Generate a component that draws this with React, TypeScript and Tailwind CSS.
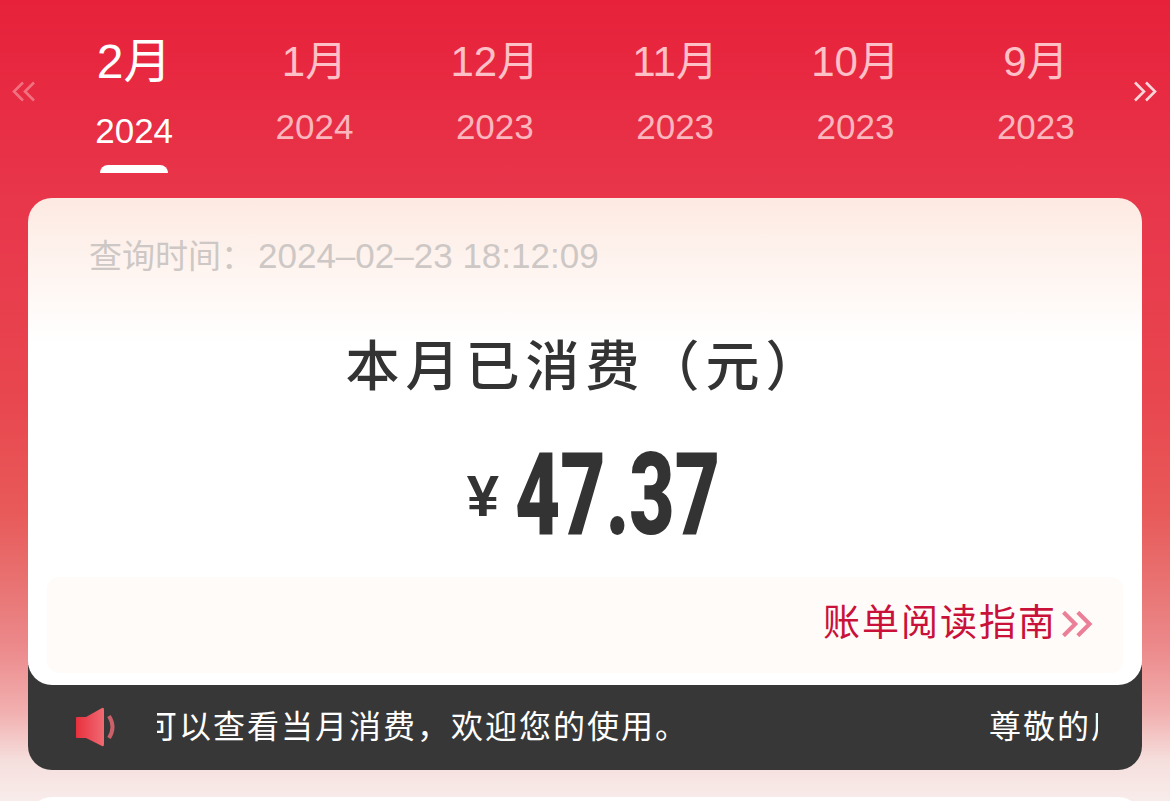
const cjk = "font-['Liberation_Sans','Noto_Sans_CJK_SC',sans-serif]";

const months = [
  { month: "2月", year: "2024", active: true },
  { month: "1月", year: "2024" },
  { month: "12月", year: "2023" },
  { month: "11月", year: "2023" },
  { month: "10月", year: "2023" },
  { month: "9月", year: "2023" },
];

const Chevrons = ({ flip, className, width = 2.6 }: { flip?: boolean; className: string; width?: number }) => (
  <svg viewBox="0 0 24 20" className={className} fill="none" stroke="currentColor" strokeWidth={width}>
    <g transform={flip ? "matrix(-1 0 0 1 24 0)" : undefined}>
      <path d="M11 1 2 10l9 9" />
      <path d="M22 1l-9 9 9 9" />
    </g>
  </svg>
);

export default function App() {
  return (
    <div className={`h-[801px] w-[1170px] overflow-hidden bg-[linear-gradient(180deg,#e7213a_0%,#e8364b_25%,#e8474f_50%,#e85a5a_64%,#e8706f_72%,#ec8a8c_81%,#f2b0b0_89%,#f5dfdd_95%,#f8ecea_100%)] ${cjk}`}>
      {/* Month tabs */}
      <div className="flex h-[198px] items-start">
        <div className="flex h-[182px] w-[44px] items-center pl-[12px]">
          <Chevrons className="h-[23px] w-[24px] text-[#f0717f]" />
        </div>
        <div className="grid w-[1082px] grid-cols-6">
          {months.map((m) => (
            <div key={m.month + m.year} className="flex flex-col items-center">
              <div className={`mt-[34px] h-[56px] text-center leading-[56px] ${m.active ? "text-[48px] text-white" : "text-[42px] text-[#fcc0c6]"}`}>
                {m.month}
              </div>
              <div className={`text-[35px] leading-[40px] ${m.active ? "mt-[21px] text-white" : "mt-[17px] text-[#fbb6bd]"}`}>
                {m.year}
              </div>
              {m.active && <div className="mt-[14px] h-[8px] w-[68px] rounded-t-[8px] bg-white" />}
            </div>
          ))}
        </div>
        <div className="flex h-[182px] flex-1 items-center pl-[7px]">
          <Chevrons flip className="h-[23px] w-[24px] text-[#fcd5d8]" />
        </div>
      </div>

      {/* Summary card */}
      <div className="mx-[28px] w-[1114px]">
        <div className="relative z-10 flex h-[487px] flex-col rounded-[24px] bg-gradient-to-b from-[#fdeae2] to-white to-[30%]">
          <div className="pl-[61px] pt-[36px] text-[33px] leading-[44px] text-[#cdc8c5]">
            查询时间：<span className="ml-[4px] text-[35px]">2024–02–23 18:12:09</span>
          </div>
          <div className="mt-[56px] pl-[1px] text-center text-[54px] font-medium leading-[64px] tracking-[6px] text-[#333333]">本月已消费（元）</div>
          <div className="mt-[33px] flex h-[124px] items-center justify-center pl-[12px] text-[#333333]">
            <span className="mr-[16px] mt-[4px] text-[58px] font-bold leading-none">¥</span>
            <span className="inline-block w-[200px] origin-left scale-x-[0.68] whitespace-nowrap font-['Roboto',sans-serif] text-[115px] font-black leading-none">
              47.37
            </span>
          </div>
          <div className="mx-[19px] mt-[21px] flex h-[96px] items-center justify-end rounded-[12px] bg-[#fffbf8] pb-[3px] pr-[30px]">
            <span className="text-[37px] leading-[48px] tracking-[2px] text-[#c9113a]">账单阅读指南</span>
            <Chevrons flip width={3.2} className="ml-[3px] h-[26px] w-[33px] text-[#ec7f98]" />
          </div>
        </div>

        {/* Notice bar */}
        <div className="mt-[-20px] flex h-[105px] items-center rounded-b-[24px] bg-[#373737] pt-[18px] text-white">
          <svg viewBox="0 0 42 40" className="ml-[47px] h-[40px] w-[42px]">
            <defs>
              <linearGradient id="speaker" x1="0" x2="1" y1="0" y2="0">
                <stop offset="0" stopColor="#e8303f" />
                <stop offset="1" stopColor="#f06a72" />
              </linearGradient>
            </defs>
            <path d="M1 11q0-1 1-1h9L27 1q2-1 2 2v34q0 3-2 2L11 31H2q-1 0-1-1z" fill="url(#speaker)" />
            <path d="M34 9q7 11 0 22" fill="none" stroke="#c9606a" strokeWidth="4" />
          </svg>
          <div className="ml-[40px] flex h-[48px] w-[941px] items-center overflow-hidden whitespace-nowrap text-[32px] leading-[48px] tracking-[2px]">
            <span className="ml-[-12px] shrink-0">可以查看当月消费，欢迎您的使用。</span>
            <span className="ml-[300px] shrink-0">尊敬的用户</span>
          </div>
        </div>
      </div>

      {/* Next card peeking at the bottom */}
      <div className="mx-[28px] mt-[27px] h-[40px] rounded-t-[24px] bg-white" />
    </div>
  );
}
